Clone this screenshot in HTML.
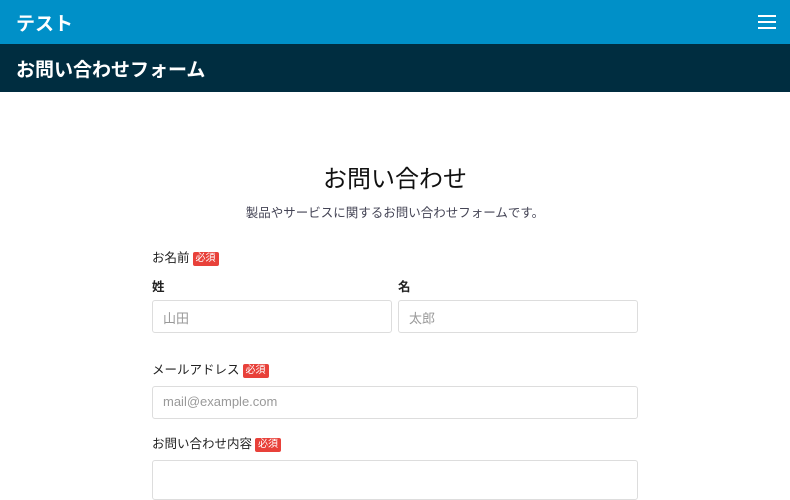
<!DOCTYPE html>
<html><head><meta charset="utf-8"><style>
*{box-sizing:border-box;margin:0;padding:0}
body{width:790px;height:470px;overflow:hidden;background:#fff;font-family:"Liberation Sans","Noto Sans CJK JP",sans-serif;color:#222}
.top{position:absolute;left:0;top:0;width:790px;height:44px;background:#0090c8}
.top .t{position:absolute;left:16px;top:9px;color:#fff;font-size:19px;font-weight:bold}
.ham{position:absolute;left:758px;top:15px;width:18px}
.ham i{display:block;height:2px;background:#fff;margin-bottom:4px}
.sub{position:absolute;left:0;top:44px;width:790px;height:48px;background:#002d40}
.sub .t{position:absolute;left:16px;top:11px;color:#fff;font-size:19px;font-weight:bold}
.abs{position:absolute;white-space:nowrap}
.req{display:inline-block;background:#e8413a;color:#fff;font-size:10px;padding:1px 3px;border-radius:2px;vertical-align:1px;margin-left:3px;line-height:12px}
.in{position:absolute;height:33px;border:1px solid #ddd;border-radius:3px;font-size:13px;color:#999;padding:7px 10px}
.lbl{font-size:12.5px;color:#222}
</style></head><body>
<div class="top"><div class="t">テスト</div><div class="ham"><i></i><i></i><i></i></div></div>
<div class="sub"><div class="t">お問い合わせフォーム</div></div>
<div class="abs" style="left:0;width:790px;text-align:center;top:159px;font-size:24px;color:#111">お問い合わせ</div>
<div class="abs" style="left:0;width:790px;text-align:center;top:202px;font-size:12.5px;color:#445">製品やサービスに関するお問い合わせフォームです。</div>
<div class="abs lbl" style="left:152px;top:247px">お名前<span class="req">必須</span></div>
<div class="abs lbl" style="left:152px;top:276px;font-weight:600">姓</div>
<div class="abs lbl" style="left:398px;top:276px;font-weight:600">名</div>
<div class="in" style="left:152px;top:300px;width:240px">山田</div>
<div class="in" style="left:398px;top:300px;width:240px">太郎</div>
<div class="abs lbl" style="left:152px;top:359px">メールアドレス<span class="req">必須</span></div>
<div class="in" style="left:152px;top:386px;width:486px">mail@example.com</div>
<div class="abs lbl" style="left:152px;top:433px">お問い合わせ内容<span class="req">必須</span></div>
<div class="in" style="left:152px;top:460px;width:486px;height:40px"></div>
</body></html>
